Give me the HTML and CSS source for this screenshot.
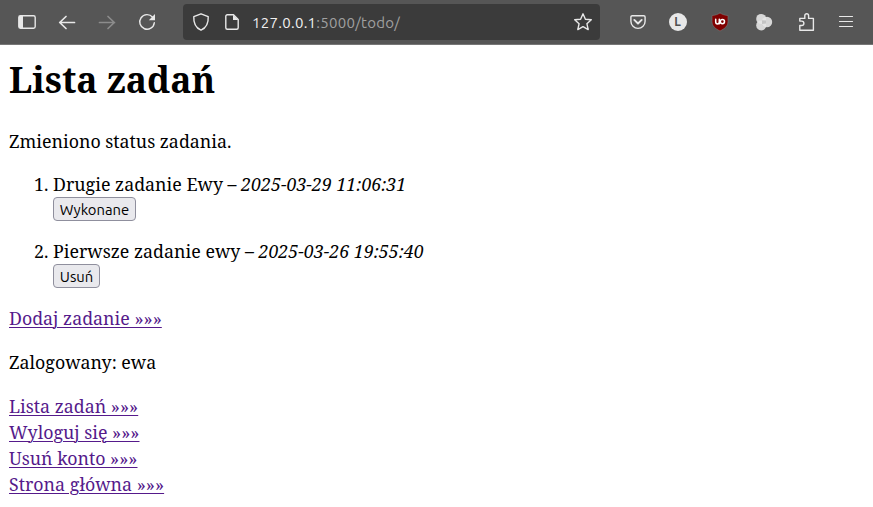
FILE: index.html
```html
<!DOCTYPE html>
<html lang="pl">
<head>
<meta charset="utf-8">
<title>Lista zadań</title>
<link rel="stylesheet" href="styles.css">
</head>
<body>
<header class="toolbar">
  <nav class="nav-buttons">
    <svg class="icon" viewBox="0 0 20 20"><rect x="1.8" y="3.8" width="16.4" height="12.4" rx="1.6"/><path class="solid" d="M2 4h4v12H2z"/></svg>
    <svg class="icon strong" viewBox="0 0 20 20"><path d="M17.500 10.5H3M9 4.500L2.7 10.5 9 16.500"/></svg>
    <svg class="icon dim strong" viewBox="0 0 20 20"><path d="M2.500 10.5h15M11 4.500l6.3 6L11 16.500"/></svg>
    <svg class="icon" viewBox="0 0 20 20"><path d="M15.6 5.2A7.3 7.3 0 1 0 17.3 10.8"/><path class="solid" d="M18 2v6.2h-6.2z"/></svg>
  </nav>
  <div class="address">
    <svg class="icon" viewBox="0 0 20 20"><path d="M10 1.8l7.2 2.9c.4 6.4-1.9 11-7.2 13.5C4.700 15.700 2.400 11.100 2.800 4.700z"/></svg>
    <svg class="icon page-icon" viewBox="0 0 20 20"><path d="M5.300 2.700h6.200L16.200 7.500v8.300a1.500 1.500 0 0 1-1.500 1.500H5.300a1.500 1.500 0 0 1-1.500-1.500V4.200a1.500 1.500 0 0 1 1.500-1.500z"/><path class="solid" d="M11 2.700v5.300h5.200z"/></svg>
    <span class="url"><b>127.0.0.1</b>:5000/todo/</span>
    <svg class="icon star" viewBox="0 0 20 20"><path d="M10 1.800l2.400 5.400 5.900.6-4.400 3.900 1.300 5.900-5.200-3-5.200 3 1.300-5.900-4.400-3.900 5.900-.6z"/></svg>
  </div>
  <div class="extensions">
    <svg class="icon" viewBox="0 0 20 20"><path d="M4.200 3.700h11.600a1.300 1.300 0 0 1 1.300 1.300v4.300a7.100 7.100 0 0 1-14.200 0V5a1.300 1.300 0 0 1 1.300-1.300z"/><path d="M6.300 7.900L10 11.500l3.700-3.600" stroke-width="1.900"/></svg>
    <span class="account">L</span>
    <svg class="icon ublock" viewBox="0 0 20 20"><path class="shield" d="M10 1c2.300 1.500 4.800 2.300 8 2.500v6c0 4.500-3 7-8 9.500-5-2.500-8-5-8-9.500v-6C5.200 3.300 7.700 2.500 10 1z"/><path class="mark" d="M5.700 7.200v2.900a1.800 1.800 0 0 0 3.600 0V7.200M9.300 8v3.800"/><circle class="mark" cx="12.400" cy="9.600" r="2.100"/></svg>
    <svg class="icon circles" viewBox="0 0 20 20"><circle cx="7.200" cy="6.900" r="5"/><circle cx="7.200" cy="13.400" r="5"/><circle cx="13" cy="10" r="5.200"/><path d="M8 8.300l4 .3v3l-4 .5z"/></svg>
    <svg class="icon" viewBox="0 0 20 20"><path d="M2.800 18.200V13.500h1.900a2.200 2.200 0 0 0 0-4.400H2.800V6.400h5V3.700a1.900 1.900 0 0 1 3.800 0v2.700h4.800v11.800z"/></svg>
    <svg class="icon menu" viewBox="0 0 20 20"><path d="M3.500 4.500h13M3.500 9.500h13M3.500 14.500h13"/></svg>
  </div>
</header>
<main>
  <h1>Lista zadań</h1>
  <p class="flash">Zmieniono status zadania.</p>
  <ol>
    <li><span>Drugie zadanie Ewy – <em>2025-03-29 11:06:31</em></span><button class="done">Wykonane</button></li>
    <li><span>Pierwsze zadanie ewy – <em>2025-03-26 19:55:40</em></span><button class="remove">Usuń</button></li>
  </ol>
  <p><a href="#">Dodaj zadanie »»»</a></p>
  <p>Zalogowany: ewa</p>
  <p class="links"><a href="#">Lista zadań »»»</a><br><a href="#">Wyloguj się »»»</a><br><a href="#">Usuń konto »»»</a><br><a href="#">Strona główna »»»</a></p>
</main>
</body>
</html>
```
FILE: styles.css
```css
* { box-sizing: border-box; }
body {
  margin: 0;
  background: #fff;
  color: #000;
  font: 17.800px/26px "Noto Serif", "Droid Serif", "DejaVu Serif Condensed", "DejaVu Serif", serif;
}
.toolbar {
  display: flex;
  align-items: center;
  height: 45px;
  background: #565656;
  border-bottom: 1px solid #777;
}
.nav-buttons { display: flex; gap: 20px; width: 183px; padding-left: 17px; }
.icon {
  width: 20px;
  height: 20px;
  flex: none;
  fill: none;
  stroke: #e8e8e8;
  stroke-width: 1.4;
  stroke-linejoin: round;
  stroke-linecap: round;
}
.strong { stroke-width: 1.7; }
.solid { fill: #e8e8e8; stroke: none; }
.dim { stroke: #8c8c8c; }
.address {
  display: flex;
  align-items: center;
  width: 417px;
  height: 36px;
  padding: 0 7px 0 8px;
  background: #3b3b3b;
  border-radius: 4px;
}
.page-icon { margin-left: 11px; }
.url {
  margin: 2px 0 0 10px;
  color: #a0a0a0;
  font: 15px/20px Ubuntu, "Noto Sans", sans-serif;
  letter-spacing: .28px;
}
.url b { color: #f0f0f0; font-weight: 400; }
.star { margin-left: auto; }
.extensions { display: flex; align-items: center; gap: 20px; margin-left: 27.500px; }
.account {
  width: 18px;
  height: 18px;
  margin: 0 1px;
  border-radius: 50%;
  background: #e8e8e8;
  color: #505050;
  font: bold 12px/18px Ubuntu, "Noto Sans", sans-serif;
  text-align: center;
}
.ublock { margin: 0 2px 0 2px; }
.circles { margin: 0 3px 0 2px; }
.menu { margin-left: -1px; stroke-width: 1.2; }
.shield { fill: #800000; stroke: #777; stroke-width: .6; }
.mark { stroke: #fff; stroke-width: 1.5; }
.circles circle { fill: #e6e6e6; fill-opacity: .9; stroke: none; }
.circles path { fill: #c4c4c4; stroke: none; }
main { padding: 16px 9px 0; }
h1 { margin: 0; font-size: 35.600px; line-height: 36px; }
p { margin: 0 0 18px; }
.flash { margin: 31px 0 17px; }
.links { margin: 0; }
ol { margin: 0 0 18px; padding-left: 44px; }
li { height: 49px; margin-bottom: 18px; }
li span { display: block; height: 26px; letter-spacing: .01px; }
button {
  display: block;
  height: 24px;
  padding: 2px 0 0;
  border: 1px solid #8f8f9d;
  border-radius: 4px;
  background: #e9e9ed;
  color: #000;
  font: 14.800px/20px Ubuntu, "Noto Sans", sans-serif;
}
.done { width: 83px; }
.remove { width: 47px; }
a { color: #551a8b; text-underline-offset: 2px; text-decoration-thickness: 1px; }
```
